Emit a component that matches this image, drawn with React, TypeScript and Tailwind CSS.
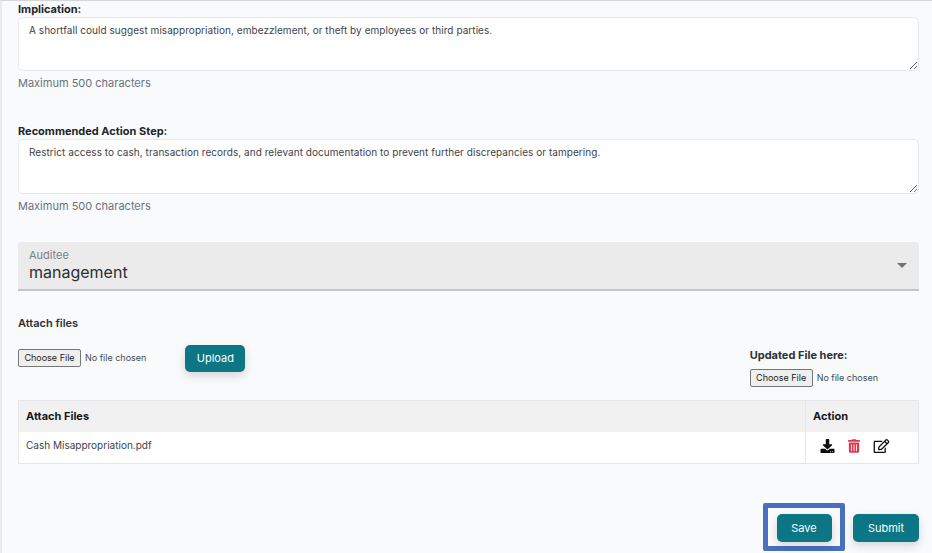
import { FaDownload, FaRegEdit, FaTrashAlt } from "react-icons/fa";

const font = "font-['Inter','Noto_Sans',sans-serif]";

function TextBlock({ label, value, height }: { label: string; value: string; height: string }) {
  return (
    <div className="flex flex-col">
      <label className="text-[11px] leading-[14px] font-bold text-[#212529]">{label}</label>
      <textarea
        readOnly
        defaultValue={value}
        className={`mt-[1px] w-full ${height} bg-white border border-[#e5e7ea] rounded-[5px] px-[10px] py-[4.5px] text-[10px] tracking-[0.05px] leading-[14px] text-[#3d4349] outline-none ${font}`}
      />
      <div className="mt-[5px] text-[11px] leading-[14px] text-[#6c7278]">Maximum 500 characters</div>
    </div>
  );
}

function FileInput() {
  return (
    <div className="flex items-center text-[9px] text-[#444a50]">
      <span className="w-[63px] h-[18px] flex items-center justify-center bg-[#efefef] border border-[#767676] rounded-[2px] text-[#222]">Choose File</span>
      <span className="ml-[4px]">No file chosen</span>
    </div>
  );
}

export default function App() {
  return (
    <div className={`w-[932px] h-[553px] overflow-hidden bg-[#f8fafc] border-t border-t-[#d5d6d9] border-l-2 border-l-[#e9eaec] ${font}`}>
      <div className="pl-[16px] pr-[13px] pt-[1px] flex flex-col">
        <TextBlock
          label="Implication:"
          height="h-[54px]"
          value="A shortfall could suggest misappropriation, embezzlement, or theft by employees or third parties."
        />
        <div className="mt-[34px]">
          <TextBlock
            label="Recommended Action Step:"
            height="h-[55px]"
            value="Restrict access to cash, transaction records, and relevant documentation to prevent further discrepancies or tampering."
          />
        </div>

        <div className="mt-[29px] h-[49px] bg-[#ebebec] border-b-2 border-b-[#c4c5c7] rounded-t-[4px] pl-[11px] pr-[12px] flex items-center justify-between">
          <div className="flex flex-col">
            <span className="text-[11px] leading-[14px] text-[#7c7f83]">Auditee</span>
            <span className="text-[16px] leading-[21px] text-[#2c2f33]">management</span>
          </div>
          <svg width="10" height="5" viewBox="0 0 10 5"><path d="M0 0h10L5 5z" fill="#6f7276" /></svg>
        </div>

        <div className="mt-[25px] text-[11px] leading-[14px] font-semibold text-[#2b3036]">Attach files</div>

        <div className="mt-[15px] flex items-start justify-between">
          <div className="flex items-start">
            <div className="mt-[4px]"><FileInput /></div>
            <button className="ml-[39px] w-[60px] h-[27px] rounded-[5px] bg-[#0c7685] text-white text-[11px] shadow-[0_4px_10px_rgba(0,0,0,0.15)]">Upload</button>
          </div>
          <div className="mr-[41px] mt-[3px] flex flex-col">
            <span className="text-[11px] leading-[14px] font-bold text-[#2b3036]">Updated File here:</span>
            <div className="mt-[7px]"><FileInput /></div>
          </div>
        </div>

        <div className="mt-[13px] border border-[#e5e6e8] bg-white">
          <div className="flex h-[31px] bg-[#f1f1f2] text-[11px] font-bold text-[#15181b]">
            <div className="flex-1 pl-[7px] flex items-center">Attach Files</div>
            <div className="w-[113px] pl-[7px] flex items-center border-l border-l-[#e5e6e8]">Action</div>
          </div>
          <div className="flex h-[31px] text-[10px] text-[#3d4349]">
            <div className="flex-1 pl-[7px] pt-[6px]">Cash Misappropriation.pdf</div>
            <div className="w-[113px] pl-[14px] pt-[7px] flex items-start gap-[13px] border-l border-l-[#e5e6e8]">
              <FaDownload className="w-[15px] h-[14px] text-[#0b0b0b]" />
              <FaTrashAlt className="w-[12px] h-[14px] text-[#dc3b52]" />
              <FaRegEdit className="w-[17px] h-[14px] text-[#111]" />
            </div>
          </div>
        </div>

        <div className="mt-[39px] flex justify-end items-center gap-[8px]">
          <div className="w-[82px] h-[48px] border-[5px] border-[#4a6fbe] rounded-[2px] flex items-center justify-center">
            <button className="mt-[2px] w-[55px] h-[28px] rounded-[5px] bg-[#0c7685] text-white text-[11px] shadow-[0_4px_10px_rgba(0,0,0,0.15)]">Save</button>
          </div>
          <button className="mt-[2px] w-[66px] h-[28px] rounded-[5px] bg-[#0c7685] text-white text-[11px] shadow-[0_4px_10px_rgba(0,0,0,0.15)]">Submit</button>
        </div>
      </div>
    </div>
  );
}
